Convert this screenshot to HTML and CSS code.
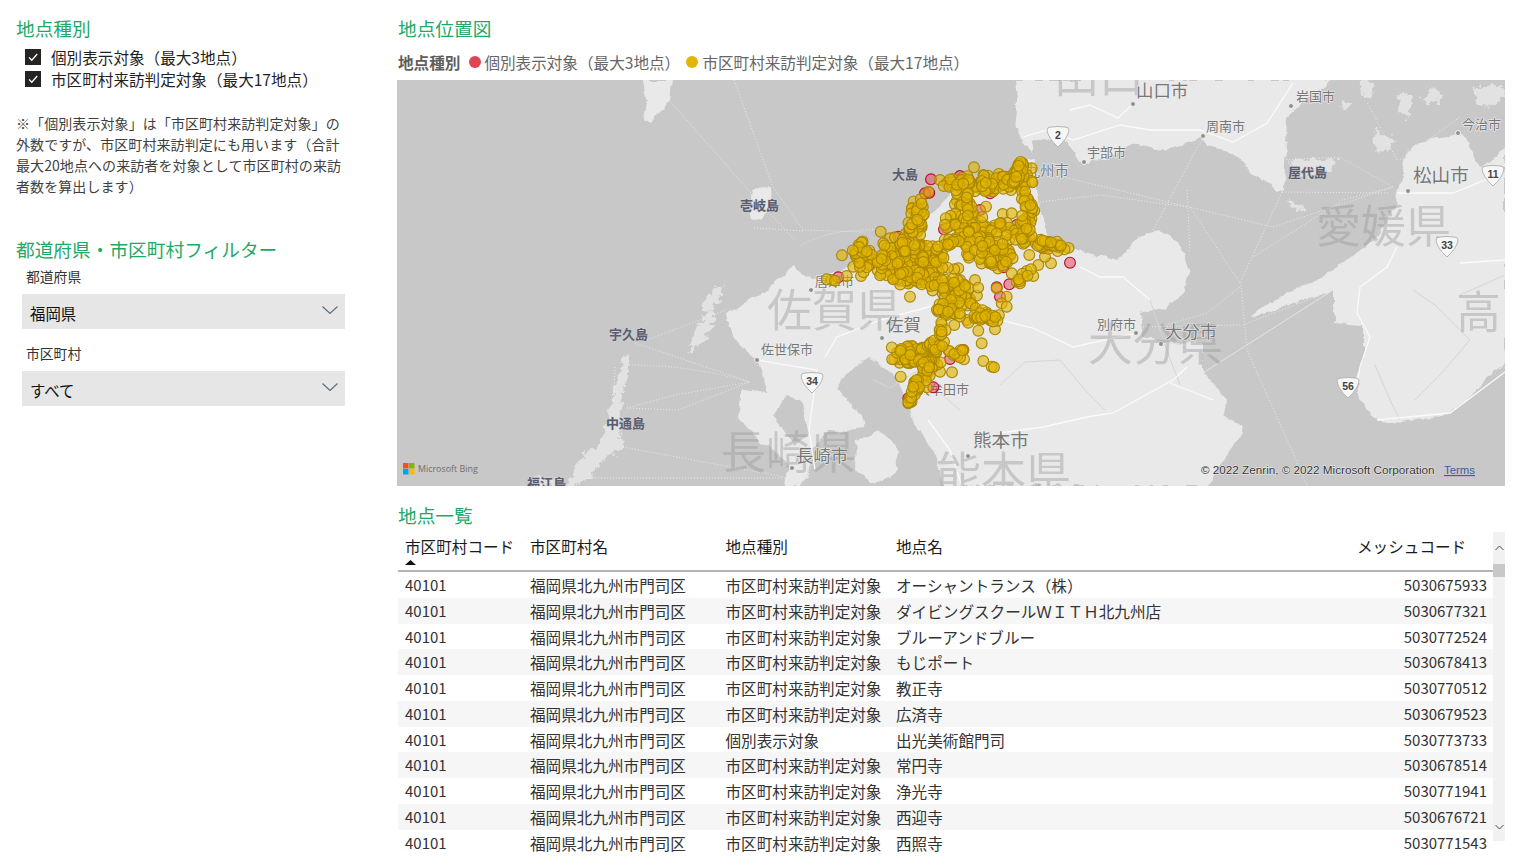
FILE: index.html
```html
<!DOCTYPE html>
<html lang="ja">
<head>
<meta charset="utf-8">
<title>地点位置図</title>
<link rel="stylesheet" href="styles.css">
</head>
<body>
<div class="page">
  <aside class="side">
    <h2 class="title title-first">地点種別</h2>
    <div class="checks">
      <div class="check"><svg class="box" viewBox="0 0 16 16"><rect width="16" height="16" fill="#252423"/><path d="M4 8.4l2.800 2.800L12.200 5" fill="none" stroke="#fff" stroke-width="1.3"/></svg><span>個別表示対象（最大3地点）</span></div>
      <div class="check"><svg class="box" viewBox="0 0 16 16"><rect width="16" height="16" fill="#252423"/><path d="M4 8.4l2.800 2.800L12.200 5" fill="none" stroke="#fff" stroke-width="1.3"/></svg><span>市区町村来訪判定対象（最大17地点）</span></div>
    </div>
    <p class="note">※「個別表示対象」は「市区町村来訪判定対象」の<br>外数ですが、市区町村来訪判定にも用います（合計<br>最大20地点への来訪者を対象として市区町村の来訪<br>者数を算出します）</p>
    <h2 class="title title-filter">都道府県・市区町村フィルター</h2>
    <div class="field-label field-label-first">都道府県</div>
    <div class="select"><span>福岡県</span><svg class="chev" viewBox="0 0 16 8"><path d="M.5.5L8 7.500 15.500.5" fill="none" stroke="#5b6b80" stroke-width="1.1"/></svg></div>
    <div class="field-label">市区町村</div>
    <div class="select"><span>すべて</span><svg class="chev" viewBox="0 0 16 8"><path d="M.5.5L8 7.500 15.500.5" fill="none" stroke="#5b6b80" stroke-width="1.1"/></svg></div>
  </aside>

  <main class="main">
    <h2 class="title title-first title-main">地点位置図</h2>
    <div class="legend">
      <b class="legend-name">地点種別</b>
      <i class="dot dot-red"></i><span class="legend-a">個別表示対象（最大3地点）</span>
      <i class="dot dot-gold"></i><span>市区町村来訪判定対象（最大17地点）</span>
    </div>

    <div class="map">
      <svg class="map-svg" viewBox="397 80 1108 406" width="1108" height="406">
        <defs>
          <filter id="rough" x="-5%" y="-5%" width="110%" height="110%">
            <feTurbulence type="fractalNoise" baseFrequency="0.07" numOctaves="4" seed="7"/>
            <feDisplacementMap in="SourceGraphic" scale="8" xChannelSelector="R" yChannelSelector="G"/>
            <feGaussianBlur stdDeviation="0.35"/>
          </filter>
          <filter id="mottle" x="-20%" y="-20%" width="140%" height="140%">
            <feTurbulence type="fractalNoise" baseFrequency="0.16" numOctaves="3" seed="3"/>
            <feDisplacementMap in="SourceGraphic" scale="12" xChannelSelector="R" yChannelSelector="G"/>
            <feGaussianBlur stdDeviation="0.4"/>
          </filter>
          <path id="shield" d="M-11-7Q-11-10-7-10Q0-11 7-10Q11-10 11-7Q10 1 0 10Q-10 1-11-7Z" fill="#f7f7f7" stroke="#b5b5b5" stroke-width="1"/>
        </defs>
        <rect x="397" y="80" width="1108" height="406" fill="#c8c8c8"/>

        <g class="land" filter="url(#rough)">
          <!-- Chugoku -->
          <path d="M1016 80L1018 100L1016 120L1018 135L1024 145L1030 152L1033 143L1047 137L1067 143L1083 163L1110 157L1133 143L1157 150L1187 143L1203 138L1207 147L1233 153L1253 173L1270 183L1277 193L1284 190L1287 117L1300 105L1315 92L1333 80Z"/>
          <!-- Shikoku -->
          <path d="M1397 193L1403 172L1407 152L1420 142L1440 138L1463 135L1472 150L1480 167L1492 158L1505 150L1505 363L1480 385L1460 407L1443 415L1400 423L1375 420L1360 400L1357 377L1363 357L1363 325L1333 323L1333 292L1300 300L1270 312L1250 318L1255 312L1290 290L1317 280L1350 257L1377 237L1395 208Z"/>
          <!-- Kyushu -->
          <path d="M1036 158L1035 180L1037 197L1043 220L1050 240L1077 250L1117 260L1140 237L1160 230L1180 243L1190 270L1183 293L1167 307L1140 313L1143 337L1163 342L1203 343L1203 373L1213 383L1227 400L1223 413L1243 427L1233 447L1207 486L943 486L935 457L913 420L910 407L895 375L870 357L848 372L836 388L860 413L864 425L848 432L830 430L808 455L810 475L800 486L785 486L789 467L775 450L761 443L738 417L742 390L769 393L765 383L757 360L734 340L726 313L746 303L769 287L793 267L811 280L830 275L850 268L880 250L905 228L933 213L953 193L967 177L1020 180L1023 160Z"/>
          <!-- Shimabara -->
          <path d="M856 440L880 432L896 445L897 468L875 486L855 470Z"/>
          <!-- Tsushima, Iki -->
          <path d="M644 80L672 80L670 100L660 110L650 123L643 118L647 98Z"/>
          <path d="M752 190L770 187L771 205L762 221L752 218L750 205Z"/>
        </g>
        <g class="land land-mottled" filter="url(#mottle)">
          <!-- Hirado, Matsuura -->
          <path d="M700 310L708 298L716 288L724 284L720 298L708 312Z"/>
          <path d="M688 355L696 328L712 308L716 314L704 342Z"/>
          <!-- Goto -->
          <path d="M626 352L629 366L622 400L619 438L624 445L618 452L602 460L592 476L576 486L566 486L580 458L602 442L611 402Z"/>
          <path d="M526 486L538 476L552 478L566 486Z"/>
          <!-- Inland Sea islands -->
          <path d="M1290 162L1310 158L1336 160L1333 170L1310 176L1294 174Z"/>
          <path d="M1285 200L1302 205L1304 212L1292 208Z"/>
          <path d="M1360 80L1368 80L1375 92L1362 98Z"/>
          <path d="M1430 88L1442 92L1435 105L1422 100Z"/>
          <path d="M1375 130L1395 140L1385 155L1372 145Z"/>
          <path d="M1470 88L1500 84L1505 98L1482 108Z"/>
          <path d="M1340 100L1352 104L1345 112Z"/>
          <path d="M1400 92L1412 96L1408 118L1398 112Z"/>
        </g>
        <g class="sea" filter="url(#rough)">
          <path d="M785 397L800 400L808 435L795 445L772 415Z"/>
        </g>

        <g class="bounds">
          <path d="M1000 385L1025 362L1060 360L1085 390L1105 410"/>
          <path d="M1150 300L1165 345L1180 385"/>
          <path d="M1413 290L1435 305L1470 340L1440 375L1415 400"/>
          <path d="M1460 295L1505 275"/>
          <path d="M873 380L890 388L915 372L960 410"/>
          <path d="M1400 420L1390 400L1375 365"/>
        </g>
        <g class="roads">
          <path d="M1023 137L1047 130L1073 140L1120 125L1150 130L1200 130L1233 142L1267 123L1293 83"/>
          <path d="M1133 104L1118 118L1090 105L1070 110"/>
          <path d="M1000 320L1033 328L1073 347L1137 333"/>
          <path d="M1080 267L1100 277L1123 277L1150 300"/>
          <path d="M1187 367L1173 380L1113 413L1087 417L1043 427L1000 433"/>
          <path d="M1170 383L1213 400"/>
          <path d="M1397 247L1387 267L1360 287L1357 313L1370 337L1360 367L1357 385"/>
          <path d="M1397 193L1413 193L1453 193L1490 178"/>
          <path d="M1460 263L1505 260"/>
          <path d="M1377 420L1450 413L1505 372"/>
          <path d="M825 357L837 337L880 320L943 303"/>
          <path d="M757 360L817 370L809 430L815 470"/>
          <path d="M928 420L950 450L962 486"/>
        </g>
        <g class="ferries">
          <path d="M669 100L757 200L795 240"/>
          <path d="M734 80L773 187L803 230L865 232"/>
          <path d="M754 228L803 231"/>
          <path d="M800 246Q830 228 880 230"/>
          <path d="M647 340L726 310"/>
          <path d="M635 343L750 382"/>
          <path d="M629 365Q690 365 750 382"/>
          <path d="M627 408L675 395L750 382"/>
          <path d="M627 408L678 410L750 382"/>
          <path d="M615 367L613 410"/>
          <path d="M623 447L785 477"/>
          <path d="M580 478L785 478"/>
          <path d="M1063 177L1273 227"/>
          <path d="M1040 202L1100 195L1187 207"/>
          <path d="M1273 227L1393 187"/>
          <path d="M1282 192L1390 193"/>
          <path d="M1280 160L1340 157L1393 187"/>
          <path d="M1397 160L1367 102"/>
          <path d="M1153 230L1203 137"/>
          <path d="M1187 190L1190 253"/>
          <path d="M1190 207L1240 283"/>
          <path d="M1240 283L1283 190"/>
          <path d="M1241 285L1247 350L1293 453L1307 486"/>
          <path d="M1140 327L1240 325"/>
          <path d="M1240 287L1207 313L1160 327"/>
          <path d="M1243 325L1333 290"/>
          <path d="M1253 257L1343 200L1393 187"/>
          <path d="M1400 160L1460 117"/>
        </g>
        <path class="strait" d="M1203 373L1333 290"/>

        <g class="cities">
          <circle cx="1133" cy="104" r="2.5"/><circle cx="1291" cy="106" r="2.5"/><circle cx="1203" cy="136" r="2.5"/><circle cx="1084" cy="162" r="2.5"/><circle cx="1458" cy="133" r="2.5"/><circle cx="1408" cy="191" r="2.5"/><circle cx="1136" cy="333" r="2.5"/><circle cx="1161" cy="344" r="2.5"/><circle cx="811" cy="290" r="2.5"/><circle cx="882" cy="338" r="2.5"/><circle cx="757" cy="360" r="2.5"/><circle cx="968" cy="456" r="2.5"/><circle cx="792" cy="468" r="2.5"/>
        </g>

        <g class="pref">
          <text x="767" y="327">佐賀県</text>
          <text x="1316" y="243">愛媛県</text>
          <text x="1088" y="361">大分県</text>
          <text x="721" y="469">長崎県</text>
          <text x="936" y="490">能本県</text>
          <text x="1456" y="329">高</text>
          <text x="1054" y="93">山口</text>
        </g>
        <g class="city city-md">
          <text x="1136" y="97">山口市</text>
          <text class="city-lg" x="1413" y="182">松山市</text>
          <text x="886" y="331">佐賀</text>
          <text x="1165" y="338">大分市</text>
          <text class="city-lg" x="973" y="447">熊本市</text>
          <text x="796" y="462">長崎市</text>
        </g>
        <g class="city city-sm">
          <text class="city-kita" x="1011" y="176">北九州市</text>
          <text x="1296" y="101">岩国市</text>
          <text x="1206" y="131">周南市</text>
          <text x="1087" y="157">宇部市</text>
          <text x="1462" y="129">今治市</text>
          <text x="815" y="286">唐津市</text>
          <text x="761" y="354">佐世保市</text>
          <text x="1097" y="329">別府市</text>
          <text x="917" y="394">大牟田市</text>
        </g>
        <g class="isle">
          <text x="1288" y="177">屋代島</text>
          <text x="892" y="179">大島</text>
          <text x="740" y="210">壱岐島</text>
          <text x="609" y="339">宇久島</text>
          <text x="606" y="428">中通島</text>
          <text x="527" y="488">福江島</text>
        </g>
        <g class="shields">
          <g transform="translate(1058 137)"><use href="#shield"/><text y="2">2</text></g>
          <g transform="translate(812 383)"><use href="#shield"/><text y="2">34</text></g>
          <g transform="translate(1493 176)"><use href="#shield"/><text y="2">11</text></g>
          <g transform="translate(1447 247)"><use href="#shield"/><text y="2">33</text></g>
          <g transform="translate(1348 388)"><use href="#shield"/><text y="2">56</text></g>
        </g>

        <g id="pins"></g>

        <g>
          <rect x="403" y="463" width="5.5" height="5.5" fill="#f25022"/>
          <rect x="409" y="463" width="5.5" height="5.5" fill="#7fba00"/>
          <rect x="403" y="469" width="5.5" height="5.5" fill="#00a4ef"/>
          <rect x="409" y="469" width="5.5" height="5.5" fill="#ffb900"/>
          <text class="bing" x="418" y="472">Microsoft Bing</text>
          <text class="copy" x="1201" y="474">© 2022 Zenrin, © 2022 Microsoft Corporation</text>
          <text class="terms" x="1444" y="474">Terms</text>
        </g>
      </svg>
    </div>

    <h2 class="title title-main title-list">地点一覧</h2>
    <div class="grid-wrap">
      <div class="grid">
        <div class="row head">
          <div class="code-h">市区町村コード<svg class="sort" viewBox="0 0 11 5"><path d="M0 5L5.500 0 11 5Z" fill="#111"/></svg></div>
          <div>市区町村名</div><div>地点種別</div><div>地点名</div><div>メッシュコード</div>
        </div>
        <div class="row"><div class="num">40101</div><div>福岡県北九州市門司区</div><div>市区町村来訪判定対象</div><div>オーシャントランス（株）</div><div class="num end">5030675933</div></div>
        <div class="row"><div class="num">40101</div><div>福岡県北九州市門司区</div><div>市区町村来訪判定対象</div><div>ダイビングスクールＷＩＴＨ北九州店</div><div class="num end">5030677321</div></div>
        <div class="row"><div class="num">40101</div><div>福岡県北九州市門司区</div><div>市区町村来訪判定対象</div><div>ブルーアンドブルー</div><div class="num end">5030772524</div></div>
        <div class="row"><div class="num">40101</div><div>福岡県北九州市門司区</div><div>市区町村来訪判定対象</div><div>もじポート</div><div class="num end">5030678413</div></div>
        <div class="row"><div class="num">40101</div><div>福岡県北九州市門司区</div><div>市区町村来訪判定対象</div><div>教正寺</div><div class="num end">5030770512</div></div>
        <div class="row"><div class="num">40101</div><div>福岡県北九州市門司区</div><div>市区町村来訪判定対象</div><div>広済寺</div><div class="num end">5030679523</div></div>
        <div class="row"><div class="num">40101</div><div>福岡県北九州市門司区</div><div>個別表示対象</div><div>出光美術館門司</div><div class="num end">5030773733</div></div>
        <div class="row"><div class="num">40101</div><div>福岡県北九州市門司区</div><div>市区町村来訪判定対象</div><div>常円寺</div><div class="num end">5030678514</div></div>
        <div class="row"><div class="num">40101</div><div>福岡県北九州市門司区</div><div>市区町村来訪判定対象</div><div>浄光寺</div><div class="num end">5030771941</div></div>
        <div class="row"><div class="num">40101</div><div>福岡県北九州市門司区</div><div>市区町村来訪判定対象</div><div>西迎寺</div><div class="num end">5030676721</div></div>
        <div class="row"><div class="num">40101</div><div>福岡県北九州市門司区</div><div>市区町村来訪判定対象</div><div>西照寺</div><div class="num end">5030771543</div></div>
      </div>
      <div class="scrollbar">
        <div class="sb-up"><svg viewBox="0 0 9 6" width="9" height="6"><path d="M.5 5L4.500 1l4 4" fill="none" stroke="#444" stroke-width="1"/></svg></div>
        <div class="sb-thumb"></div>
        <div class="sb-space"></div>
        <div class="sb-down"><svg viewBox="0 0 9 6" width="9" height="6"><path d="M.5 1L4.500 5l4-4" fill="none" stroke="#444" stroke-width="1"/></svg></div>
      </div>
    </div>
  </main>
</div>
<script src="script.js"></script>
</body>
</html>
```
FILE: styles.css
```css
* { box-sizing: border-box; }
html, body { margin: 0; padding: 0; height: 863px; overflow: hidden; background: #fff; }
body { font-family: "Noto Sans CJK JP", "Noto Sans", sans-serif; color: #252423; }
.page { display: flex; width: 1523px; height: 863px; }
.side { width: 397px; flex: none; padding-left: 16px; }
.main { width: 1108px; flex: none; }

.title { margin: 0; font-size: 18.7px; line-height: 26px; font-weight: 400; color: #1fa866; }
.title-first { margin-top: 15px; }
.title-main { padding-left: 1px; }
.title-filter { margin-top: 39.2px; }
.title-list { margin-top: 16px; }

.checks { margin: 5px 0 0 9px; }
.check { display: flex; align-items: center; height: 22px; font-size: 15.6px; color: #1f1f1f; }
.box { width: 16px; height: 16px; margin-right: 10px; flex: none; }
.note { margin: 23.4px 0 0; font-size: 14px; letter-spacing: .08px; line-height: 20.8px; color: #3f3f3f; white-space: nowrap; }

.field-label { margin: 14px 0 0 10px; height: 20px; line-height: 20px; font-size: 13.8px; color: #333; }
.field-label-first { margin-top: 4px; }
.select { display: flex; align-items: center; justify-content: space-between; width: 323px; height: 35px; margin: 8px 0 0 6px; padding: 4px 7px 0 8px; background: #e6e6e6; font-size: 15.4px; color: #111; }
.chev { width: 16px; height: 8px; margin-top: -7px; }

.legend { display: flex; align-items: center; height: 22px; margin-top: 10px; padding-left: 1px; font-size: 15.6px; color: #666; }
.legend-name { font-weight: 700; color: #605e5c; margin-right: 9px; }
.dot { width: 12px; height: 12px; border-radius: 50%; margin-right: 3px; flex: none; }
.dot-red { background: #e04455; margin-right: 3px; }
.dot-gold { background: #e3b505; margin-right: 4px; }
.legend-a { width: 202px; }

.map { height: 406px; margin-top: 7px; overflow: hidden; }
.map-svg { display: block; }
.land path { fill: #e9e9e9; }
.land-mottled { opacity: .8; }
.sea path { fill: #c8c8c8; }
.bounds path { fill: none; stroke: #d6d6d6; stroke-width: 1; }
.roads path { fill: none; stroke: #fafafa; stroke-width: 1.3; }
.ferries path { fill: none; stroke: #eaeaea; stroke-width: 1; stroke-dasharray: 1 2; }
.strait { fill: none; stroke: #e4e4e4; stroke-width: 1; }
.cities circle { fill: #8f8f8f; stroke: #f3f3f3; stroke-width: 1; }
.pref text { font-size: 45px; fill: #9a9a9a; opacity: .42; }
.city text { fill: #777; stroke: #eee; stroke-width: 1.2px; paint-order: stroke; }
.city-md text { font-size: 17.4px; }
.city-md .city-lg { font-size: 18.6px; }
.city-sm text { font-size: 13px; }
.city-sm .city-kita { font-size: 14.5px; }
.isle text { font-size: 13px; font-weight: 700; fill: #5a5c70; stroke: #d0d0d0; stroke-width: 1px; paint-order: stroke; }
.shields text { font-family: "Liberation Sans", sans-serif; font-size: 10.5px; font-weight: 700; fill: #444; text-anchor: middle; }
.bing { font-family: "Open Sans", sans-serif; font-size: 8.9px; fill: #6f6f6f; }
.copy, .terms { font-family: "Liberation Sans", sans-serif; }
.copy { font-size: 11.7px; fill: #333; stroke: #eee; stroke-width: 1px; paint-order: stroke; }
.terms { font-size: 11.4px; fill: #3f5ba5; text-decoration: underline; }

.grid-wrap { display: flex; align-items: flex-start; margin-top: 4px; }
.grid { width: 1096px; margin-left: 1px; flex: none; font-size: 15.6px; color: #333; }
.row { display: grid; grid-template-columns: 125px 195.5px 170.5px 461px 144px; height: 25.75px; line-height: 26.5px; white-space: nowrap; }
.row > div { padding: 0 7px; }
.row:nth-child(odd) { background: #f6f6f6; }
.row.head { height: 40px; padding-top: 3px; line-height: 22px; border-bottom: 2px solid #b4b4b4; background: #fff; color: #1a1a1a; }
.code-h { position: relative; }
.sort { position: absolute; left: 7px; top: 25px; width: 11px; height: 5px; }
.num { font-size: 15px; }
.end { text-align: right; }

.scrollbar { display: flex; flex-direction: column; width: 12px; height: 309px; flex: none; margin-left: -1px; background: #f1f1f1; }
.sb-up { height: 32px; display: flex; align-items: center; justify-content: center; }
.sb-thumb { height: 13px; background: #c8c8c8; }
.sb-space { flex: 1; }
.sb-down { height: 29px; display: flex; align-items: center; justify-content: center; }

#pins .gold { fill: rgba(224, 180, 0, .62); stroke: #a98600; stroke-width: 1.1; }
#pins .red { fill: rgba(224, 68, 85, .5); stroke: #c0062a; stroke-width: 1.1; }
```
FILE: script.js
```js
// Pins are laid out from cluster data given in map-crop units (scale 3, origin 820,150).
(function () {
  var seed = 12345;
  function rnd() { seed = (seed * 16807) % 2147483647; return seed / 2147483647; }
  var red = [[333,88],[315,130],[328,128],[420,78],[480,180],[235,260],[55,382],[150,345],[750,338],[670,295],[540,225],[590,225],[530,412],[568,403],[540,440],[550,352],[390,627],[340,712],[265,745],[372,238],[225,310],[430,600],[390,485],[465,250],[545,80],[510,130]];
  var gold = [[182,245],[66,316],[35,390],[20,388],[45,392],[80,378],[123,378],[100,350],[210,265],[225,262],[190,280],[270,440],[415,355],[465,390],[610,380],[640,378],[655,345],[590,395],[575,370],[600,400],[693,340],[675,320],[628,315],[530,415],[560,440],[545,460],[560,470],[485,580],[490,633],[515,650],[522,652],[360,665],[396,667],[242,680],[432,628],[525,538],[475,542],[403,525],[440,510],[445,518],[403,358],[420,390],[548,192],[575,190],[498,170],[462,52],[320,712],[635,55],[325,125],[360,90],[382,98],[430,600],[390,485],[465,250]];
  // x1,y1,x2,y2,count,radius
  var strokes = [
    [205,345,340,345,190,62],
    [300,165,262,300,55,26],
    [395,105,620,92,90,28],
    [430,100,430,200,34,30],
    [612,32,578,100,22,12],
    [600,125,640,195,16,14],
    [375,215,610,245,50,34],
    [445,280,560,330,85,44],
    [600,265,760,300,36,15],
    [620,200,610,275,16,16],
    [340,292,420,272,14,14],
    [350,410,455,440,60,38],
    [345,470,405,490,20,18],
    [470,490,530,510,24,18],
    [225,610,340,622,70,34],
    [320,572,425,610,22,18],
    [310,625,322,680,22,16],
    [297,685,270,762,28,11],
    [118,280,128,350,18,20],
    [100,300,200,330,14,16],
    [365,520,370,560,8,12],
    [640,355,585,395,6,8]
  ];
  var pts = gold.slice();
  strokes.forEach(function (s) {
    for (var i = 0; i < s[4]; i++) {
      var t = rnd(), a = rnd() * 6.283, r = Math.sqrt(rnd()) * s[5];
      pts.push([s[0] + (s[2] - s[0]) * t + Math.cos(a) * r, s[1] + (s[3] - s[1]) * t + Math.sin(a) * r]);
    }
  });
  var host = document.getElementById('pins');
  function add(p, cls) {
    var c = document.createElementNS('http://www.w3.org/2000/svg', 'circle');
    c.setAttribute('cx', (820 + p[0] / 3).toFixed(1));
    c.setAttribute('cy', (150 + p[1] / 3).toFixed(1));
    c.setAttribute('r', 5.4);
    c.setAttribute('class', cls);
    host.appendChild(c);
  }
  red.forEach(function (p) { add(p, 'red'); });
  pts.forEach(function (p) { add(p, 'gold'); });
})();
```
